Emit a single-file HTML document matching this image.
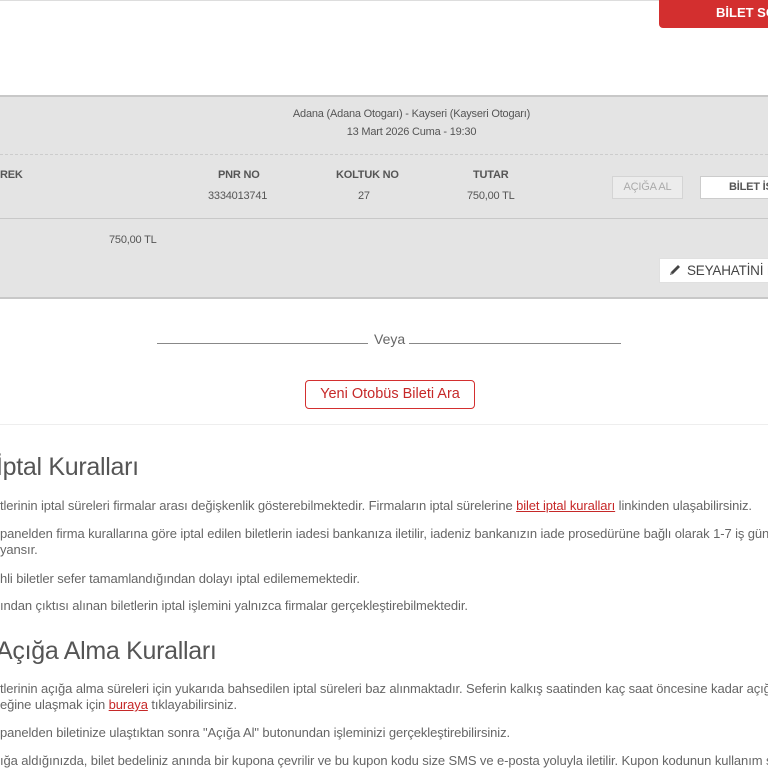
<!DOCTYPE html>
<html><head><meta charset="utf-8"><style>
*{margin:0;padding:0;box-sizing:border-box}
html,body{width:768px;height:768px;overflow:hidden;background:#fff}
body{font-family:"Liberation Sans","DejaVu Sans",sans-serif;color:#555}
#w{position:relative;width:768px;height:768px;overflow:hidden}
.a{position:absolute;white-space:nowrap}
.red{background:#d32f2f}
.panel{position:absolute;left:0;top:95px;width:768px;height:204px;background:#e4e4e4;border-top:2px solid #c8c8c8;border-bottom:2px solid #c8c8c8}
.b{font-weight:bold;color:#555}
.s{font-size:11px;letter-spacing:-0.2px}
p.a{font-size:13px;letter-spacing:-0.1px;color:#666}
h2.a{font-weight:normal;font-size:25px;letter-spacing:-0.3px;color:#555}
a{color:#c62828;text-decoration:underline}
</style></head><body><div id="w">
<div class="a" style="left:0;top:0;width:768px;height:1px;background:#ddd"></div>
<div class="a red" style="left:659px;top:-4px;width:120px;height:32px;border-radius:4px;color:#fff;font-weight:bold;font-size:13px;padding:9px 0 0 57px">BİLET SORGULA</div>
<div class="panel"></div>
<div class="a s" style="left:0;width:768px;text-align:center;top:108px;padding-left:55px">Adana (Adana Otogarı) - Kayseri (Kayseri Otogarı)</div>
<div class="a s" style="left:0;width:768px;text-align:center;top:126px;padding-left:55px">13 Mart 2026 Cuma - 19:30</div>
<div class="a" style="left:0;top:154px;width:768px;border-top:1px dashed #ccc"></div>
<div class="a b s" style="left:0;top:169px">REK</div>
<div class="a b s" style="left:218px;top:169px">PNR NO</div>
<div class="a b s" style="left:336px;top:169px">KOLTUK NO</div>
<div class="a b s" style="left:473px;top:169px">TUTAR</div>
<div class="a s" style="left:208px;top:190px">3334013741</div>
<div class="a s" style="left:358px;top:190px">27</div>
<div class="a s" style="left:467px;top:190px">750,00 TL</div>
<div class="a s" style="left:612px;top:176px;width:71px;height:23px;border:1px solid #d4d4d4;background:#ececec;color:#aaa;text-align:center;line-height:21px">AÇIĞA AL</div>
<div class="a s" style="left:700px;top:176px;width:80px;height:23px;border:1px solid #ccc;background:#fff;color:#555;font-weight:bold;padding-left:28px;line-height:21px">BİLET İŞLEM</div>
<div class="a" style="left:0;top:218px;width:768px;height:1px;background:#c8c8c8"></div>
<div class="a s" style="left:109px;top:234px">750,00 TL</div>
<div class="a" style="left:659px;top:258px;width:120px;height:25px;background:#fff;border:1px solid #e0e0e0;font-size:13.5px;letter-spacing:-0.2px;color:#444;line-height:23px;padding-left:27px">SEYAHATİNİ DÜZENLE</div>
<svg class="a" style="left:668px;top:263px" width="14" height="14" viewBox="0 0 14 14"><path d="M2 12 L3 9 L10 2 L12 4 L5 11 Z" fill="#444"/><path d="M2 12 L3 9 L5 11 Z" fill="#777"/></svg>
<div class="a" style="left:157px;top:343px;width:211px;height:1px;background:#888"></div>
<div class="a" style="left:409px;top:343px;width:212px;height:1px;background:#888"></div>
<div class="a" style="left:374px;top:331px;font-size:14px;color:#666">Veya</div>
<div class="a" style="left:305px;top:380px;width:170px;height:29px;border:1px solid #d32f2f;border-radius:4px;color:#c62828;font-size:14.5px;text-align:center;line-height:27px">Yeni Otobüs Bileti Ara</div>
<div class="a" style="left:0;top:424px;width:768px;height:1px;background:#eee"></div>
<h2 class="a" style="left:-4px;top:453px">İptal Kuralları</h2>
<p class="a" style="left:0;top:498px">tlerinin iptal süreleri firmalar arası değişkenlik gösterebilmektedir. Firmaların iptal sürelerine <a>bilet iptal kuralları</a> linkinden ulaşabilirsiniz.</p>
<p class="a" style="left:0;top:526px">panelden firma kurallarına göre iptal edilen biletlerin iadesi bankanıza iletilir, iadeniz bankanızın iade prosedürüne bağlı olarak 1-7 iş günü</p>
<p class="a" style="left:0;top:542px">yansır.</p>
<p class="a" style="left:0;top:571px">hli biletler sefer tamamlandığından dolayı iptal edilememektedir.</p>
<p class="a" style="left:0;top:598px">ından çıktısı alınan biletlerin iptal işlemini yalnızca firmalar gerçekleştirebilmektedir.</p>
<h2 class="a" style="left:-4px;top:637px">Açığa Alma Kuralları</h2>
<p class="a" style="left:0;top:681px">tlerinin açığa alma süreleri için yukarıda bahsedilen iptal süreleri baz alınmaktadır. Seferin kalkış saatinden kaç saat öncesine kadar açığa</p>
<p class="a" style="left:0;top:697px">eğine ulaşmak için <a>buraya</a> tıklayabilirsiniz.</p>
<p class="a" style="left:0;top:725px">panelden biletinize ulaştıktan sonra "Açığa Al" butonundan işleminizi gerçekleştirebilirsiniz.</p>
<p class="a" style="left:0;top:753px">ığa aldığınızda, bilet bedeliniz anında bir kupona çevrilir ve bu kupon kodu size SMS ve e-posta yoluyla iletilir. Kupon kodunun kullanım süresi</p>
</div></body></html>
